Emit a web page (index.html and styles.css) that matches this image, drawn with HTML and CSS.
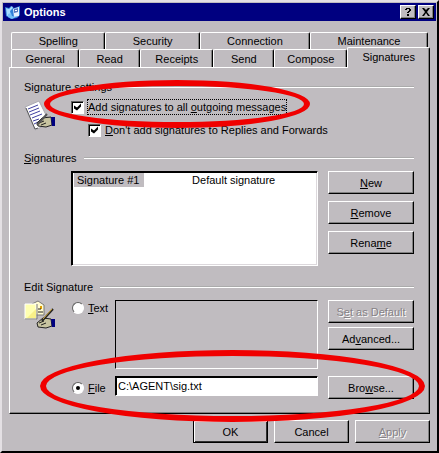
FILE: index.html
```html
<!DOCTYPE html>
<html lang="en">
<head>
    <meta charset="UTF-8">
    <meta name="viewport" content="width=device-width, initial-scale=1.0">
    <title>Options</title>
    <link rel="stylesheet" href="styles.css">
</head>
<body>
    <form class="window">
        <div class="titlebar">
            <svg class="title-icon" viewBox="0 0 16 16">
                <path d="M0 3L4 4L6 2L9 4L15 2L15 11L12 14L6 15L1 12Z" fill="#2f7fd8"/>
                <path d="M1 4l3 1 3-3 1 2-3 3 1 4-4 1z" fill="#a8dcff"/>
                <path d="M8 5l6-2v9l-5 1z" fill="#e8f0ff"/>
                <path d="M9 5l4-1v4l-4 1z" fill="#5878c0"/>
                <path d="M10 6h2v1h-2z" fill="#fff"/>
                <path d="M3 10l3-1 1 3 4 1-4 2-4-2z" fill="#78c0f8"/>
            </svg>
            <span class="title">Options</span>
            <button type="button" class="title-button" aria-label="Help">
                <svg viewBox="0 0 10 10"><path d="M2 3V2h1V1h4v1h1v2H7v1H6v1H4V5h1V4h1V2H4v1zM4 7h2v2H4z"/></svg>
            </button>
            <button type="button" class="title-button" aria-label="Close">
                <svg viewBox="0 0 10 10"><path d="M1 1h2l2 2 2-2h2L6 5l3 4H7L5 6 3 9H1l3-4z"/></svg>
            </button>
        </div>

        <div class="content">
            <!-- Back row of tabs -->
            <div class="tabs tabs-back">
                <button type="button" class="tab w94">Spelling</button>
                <button type="button" class="tab w94">Security</button>
                <button type="button" class="tab w110">Connection</button>
                <button type="button" class="tab w118">Maintenance</button>
            </div>
            <!-- Front row of tabs -->
            <div class="tabs">
                <button type="button" class="tab w68">General</button>
                <button type="button" class="tab w61">Read</button>
                <button type="button" class="tab w73">Receipts</button>
                <button type="button" class="tab w61">Send</button>
                <button type="button" class="tab w73">Compose</button>
                <button type="button" class="tab w83 selected">Signatures</button>
            </div>

            <div class="panel">
                <fieldset>
                    <legend>Signature settings</legend>
                    <div class="group">
                        <svg class="icon" viewBox="0 0 32 32">
                            <path d="M1 7L15 1L26 23L11 30Z" fill="#fff" stroke="#aaa8b0"/>
                            <path d="M2 8l9 21 3-1" fill="none" stroke="#555"/>
                            <path d="M4 9l10-4M5 12l10-4M6 15l10-4M8 18l10-4M9 21l6-2M10 24l4-2" stroke="#4040a0"/>
                            <path d="M13 23l5-5 9-1 1 8-6 2-8-1z" fill="#c8c4a0" stroke="#222"/>
                            <path d="M15 23l5-2M17 25l5-2" stroke="#222"/>
                            <path d="M13 25L23 14" stroke="#555" stroke-width="2"/>
                            <path d="M27 17h4v9h-3z" fill="#000080"/>
                        </svg>
                        <div class="checks">
                            <label class="option"><input type="checkbox" checked><span class="focused">Add signatures to all <u>o</u>utgoing messages</span></label>
                            <label class="option indent"><input type="checkbox" checked><span><u>D</u>on't add signatures to Replies and Forwards</span></label>
                        </div>
                    </div>
                </fieldset>

                <fieldset>
                    <legend><u>S</u>ignatures</legend>
                    <div class="group">
                        <div class="list">
                            <table>
                                <tr>
                                    <td class="name"><span>Signature #1</span></td>
                                    <td>Default signature</td>
                                </tr>
                            </table>
                        </div>
                        <div class="actions">
                            <button type="button" class="button"><u>N</u>ew</button>
                            <button type="button" class="button"><u>R</u>emove</button>
                            <button type="button" class="button">Rena<u>m</u>e</button>
                        </div>
                    </div>
                </fieldset>

                <fieldset>
                    <legend>Edit Signature</legend>
                    <div class="group edit">
                        <svg class="icon" viewBox="0 0 32 32">
                            <path d="M8 4l6-3 6 4v10H8z" fill="#fffbd0" stroke="#777"/>
                            <path d="M16 6h2v3h-2z" fill="#e0a000"/>
                            <path d="M14 9h3M14 12h5" stroke="#222"/>
                            <path d="M1 4h11v15H1z" fill="#ffffb0" stroke="#fff"/>
                            <path d="M1 19h12V4" fill="none" stroke="#777"/>
                            <path d="M3 18h9V9z" fill="#f8f088"/>
                            <path d="M13 23l6-5 8 1 1 7-6 2-8-1z" fill="#c8c4a0" stroke="#222"/>
                            <path d="M15 23l5-2M17 25l5-2" stroke="#222"/>
                            <path d="M18 21L29 9" stroke="#222" stroke-width="2"/>
                            <path d="M19 19L28 9" stroke="#d0a838"/>
                            <path d="M27 19h4v8h-3z" fill="#000080"/>
                        </svg>
                        <label class="option radio"><input type="radio" name="source"><span><u>T</u>ext</span></label>
                        <textarea class="field" aria-label="Signature text" disabled></textarea>
                        <div class="actions">
                            <button type="button" class="button" disabled>S<u>e</u>t as Default</button>
                            <button type="button" class="button">Ad<u>v</u>anced...</button>
                        </div>
                        <label class="option radio file"><input type="radio" name="source" checked><span><u>F</u>ile</span></label>
                        <input type="text" class="field" aria-label="Signature file" value="C:\AGENT\sig.txt">
                        <button type="button" class="button">Bro<u>w</u>se...</button>
                    </div>
                </fieldset>
            </div>

            <div class="footer">
                <button type="button" class="button default">OK</button>
                <button type="button" class="button">Cancel</button>
                <button type="button" class="button" disabled><u>A</u>pply</button>
            </div>
        </div>

        <!-- Red marks drawn over the dialog -->
        <span class="mark mark-outgoing"></span>
        <span class="mark mark-file"></span>
    </form>
</body>
</html>
```

FILE: styles.css
```css
* {
    box-sizing: border-box;
}

body {
    margin: 0;
    background: #c0bcc0;
    color: #000;
    font-family: "Liberation Sans", Arial, sans-serif;
    font-size: 11px;
    line-height: 14px;
}

button, input, textarea {
    margin: 0;
    padding: 0;
    color: inherit;
    font: inherit;
}

.window {
    position: relative;
    padding: 1px;
    border: 2px solid;
    border-color: #e4e0e4 #000 #000 #e4e0e4;
}

/* Title bar */
.titlebar {
    display: flex;
    align-items: center;
    height: 18px;
    padding: 0 2px;
    background: #000080;
    color: #fff;
}

.title-icon {
    width: 16px;
    height: 16px;
}

.title {
    flex: 1;
    padding-left: 3px;
    font-weight: bold;
}

.title-button {
    display: flex;
    align-items: center;
    justify-content: center;
    width: 16px;
    height: 14px;
    border: 1px solid;
    border-color: #fff #000 #000 #fff;
    background: #c0bcc0;
    box-shadow: inset -1px -1px #808080;
}

.title-button + .title-button {
    margin-left: 2px;
}

.title-button svg {
    flex: none;
    width: 10px;
    height: 10px;
}

.content {
    padding: 11px 6px 7px;
}

/* Tabs */
.tabs {
    display: flex;
    height: 18px;
    padding-left: 2px;
}

.tabs-back {
    height: 17px;
    padding-right: 2px;
}

.tab {
    flex-basis: 0;
    border: 1px solid;
    border-color: #fff #000 transparent #fff;
    border-bottom: 0;
    border-radius: 2px 2px 0 0;
    background: #c0bcc0;
    box-shadow: inset -1px 0 #808080;
}

.w61 { flex-grow: 61; }
.w68 { flex-grow: 68; }
.w73 { flex-grow: 73; }
.w83 { flex-grow: 83; }
.w94 { flex-grow: 94; }
.w110 { flex-grow: 110; }
.w118 { flex-grow: 118; }

/* The open tab is taller and covers the panel border */
.tab.selected {
    z-index: 1;
    margin: -2px 0 -1px;
    padding-bottom: 3px;
}

.panel {
    padding: 12px 15px 14px 14px;
    border: 1px solid;
    border-color: #fff #000 #000 #fff;
    box-shadow: inset -1px -1px #808080;
}

/* Groups */
fieldset {
    min-width: 0;
    margin: 0 0 14px;
    padding: 6px 0 0;
    border: 0;
    border-top: 2px groove #fff;
}

fieldset:last-child {
    margin-bottom: 0;
}

legend {
    padding: 0 7px 0 0;
}

.group {
    display: flex;
}

.icon {
    width: 32px;
    height: 32px;
}

.checks {
    display: flex;
    flex-direction: column;
    gap: 9px;
    padding-left: 15px;
}

.option {
    display: flex;
    align-items: center;
    gap: 4px;
    white-space: nowrap;
}

.indent {
    margin-left: 17px;
}

.focused {
    outline: 1px dotted #000;
}

input[type="checkbox"],
input[type="radio"] {
    flex: none;
    width: 13px;
    height: 13px;
    appearance: none;
    border: 1px solid;
    border-color: #606060 #fff #fff #606060;
    background: #fff;
}

input[type="checkbox"] {
    box-shadow: inset 1px 1px #000;
}

input[type="checkbox"]:checked::before {
    content: "";
    display: block;
    width: 11px;
    height: 11px;
    background: #000;
    clip-path: polygon(2px 4px, 5px 6px, 9px 2px, 9px 5px, 5px 9px, 2px 7px);
}

input[type="radio"] {
    width: 12px;
    height: 12px;
    border-radius: 50%;
}

input[type="radio"]:checked::before {
    content: "";
    display: block;
    width: 4px;
    height: 4px;
    margin: 3px;
    border-radius: 50%;
    background: #000;
}

/* Signature list */
.list {
    flex: 1;
    height: 95px;
    margin: 0 10px 0 47px;
    padding: 1px 2px;
    border: 1px solid;
    border-color: #000 #fff #fff #000;
    background: #fff;
    box-shadow: inset 1px 1px #000, inset -1px -1px #dcd8dc;
}

table {
    width: 100%;
    border-collapse: collapse;
}

td {
    padding: 0;
}

.name {
    width: 49%;
}

.name span {
    display: inline-block;
    padding: 0 5px 0 3px;
    background: #c0bcc0;
}

/* Buttons */
.actions {
    display: flex;
    flex-direction: column;
    gap: 7px;
    width: 86px;
}

.button {
    height: 23px;
    border: 1px solid;
    border-color: #fff #000 #000 #fff;
    background: #c0bcc0;
    box-shadow: inset -1px -1px #808080;
}

.button:disabled {
    color: #868286;
    text-shadow: 1px 1px #fff;
}

.default {
    border-color: #000;
    box-shadow: inset 1px 1px #fff, inset -1px -1px #303030;
}

/* Edit signature */
.edit {
    display: grid;
    grid-template-columns: 48px 43px 1fr 86px;
    row-gap: 7px;
}

.edit .actions {
    gap: 4px;
}

.radio {
    align-self: start;
    margin-top: 1px;
}

.file {
    grid-column: 2;
    align-self: center;
    margin: 0;
}

.field {
    min-width: 0;
    margin-right: 10px;
    border: 1px solid;
    border-color: #000 #fff #fff #000;
    background: #fff;
}

textarea.field {
    height: 69px;
    resize: none;
    background: #c0bcc0;
}

input.field {
    height: 20px;
    padding: 0 2px;
    box-shadow: inset 1px 1px #000;
}

.footer {
    display: flex;
    justify-content: flex-end;
    gap: 6px;
    padding-top: 6px;
}

.footer .button {
    width: 75px;
}

/* Red marks */
.mark {
    position: absolute;
    border: 6px solid #f00000;
    border-radius: 50%;
    pointer-events: none;
}

.mark-outgoing {
    top: 78px;
    left: 42px;
    width: 266px;
    height: 48px;
}

.mark-file {
    top: 348px;
    left: 38px;
    width: 385px;
    height: 72px;
}
```
